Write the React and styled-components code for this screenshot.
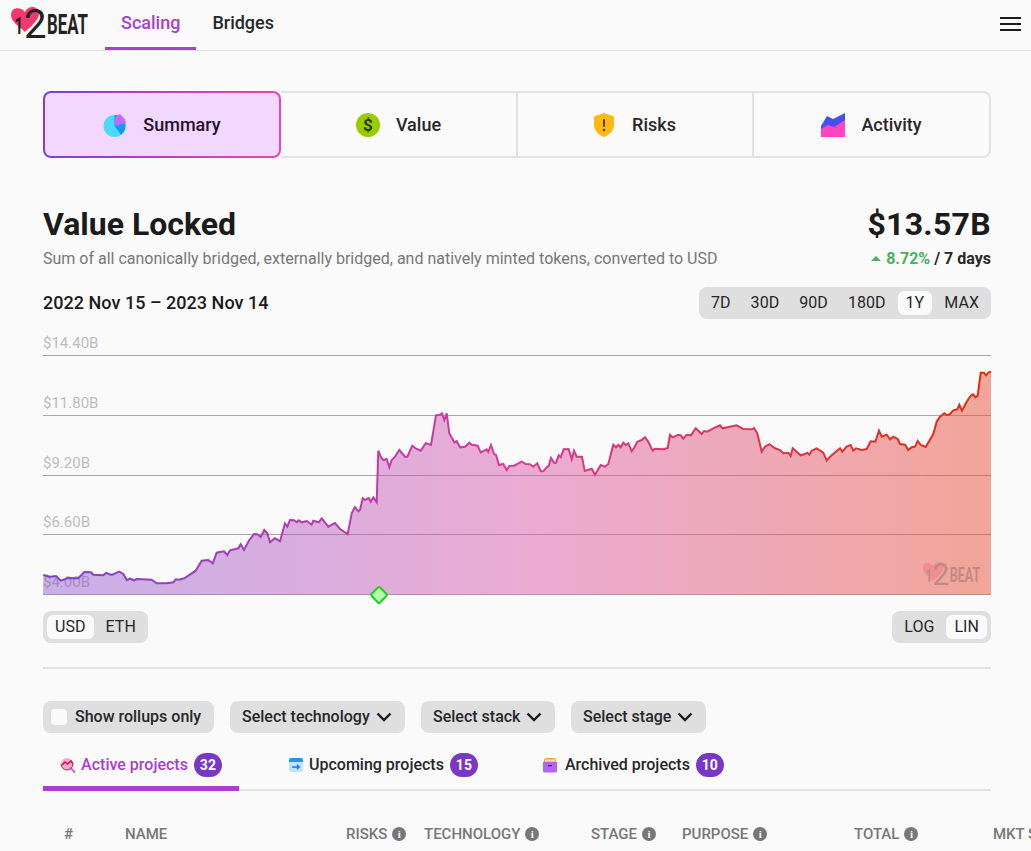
import React from "react";
import styled, { createGlobalStyle } from "styled-components";

const GlobalStyle = createGlobalStyle`
  html, body {
    margin: 0;
    height: 100%;
    overflow: hidden;
    background: #fafafa;
    font-family: Roboto, "Liberation Sans", sans-serif;
    color: #1b1b1b;
  }
  * { box-sizing: border-box; }
`;

const Page = styled.div`
  width: 1031px;
  height: 851px;
  overflow: hidden;
`;

const NavBar = styled.header`
  display: flex;
  align-items: stretch;
  height: 51px;
  border-bottom: 1px solid #e2e2e2;
  padding: 0 10px;
`;

const LogoLink = styled.div`
  display: flex;
  align-items: center;
  width: 95px;
`;

const LogoSvg = styled.svg`
  overflow: visible;
  opacity: ${(p) => p.$opacity};
`;

const NavLink = styled.a`
  display: flex;
  align-items: center;
  padding: 0 16px 2px;
  height: 50px;
  font-size: 18px;
  font-weight: 500;
  color: ${(p) => (p.$active ? "#a83fd0" : "#27272a")};
  border-bottom: 3px solid ${(p) => (p.$active ? "#a83fd0" : "transparent")};
`;

const Burger = styled.div`
  margin: 17px 0 0 auto;
  align-self: flex-start;
  display: flex;
  flex-direction: column;
  gap: 4px;
  width: 21px;
  & span {
    display: block;
    height: 2px;
    background: #1b1b1b;
  }
`;

const Main = styled.main`
  padding: 40px 40px 0 43px;
`;

const SectionTabs = styled.nav`
  display: grid;
  grid-template-columns: 238px 237px 236px 237px;
  height: 67px;
`;

const SectionTab = styled.a`
  display: flex;
  align-items: center;
  justify-content: center;
  gap: ${(p) => p.$gap || 16}px;
  font-size: 18px;
  font-weight: 500;
  color: #27272a;
  border: 2px solid #e2e2e2;
  border-left-width: 0;
  &:first-child { border-radius: 8px 0 0 8px; border-left-width: 2px; }
  &:last-child { border-radius: 0 8px 8px 0; }
  ${(p) =>
    p.$active &&
    `
    border: 2px solid transparent !important;
    border-radius: 8px !important;
    background: linear-gradient(#f2d7ff, #f2d7ff) padding-box,
      linear-gradient(90deg, #7e41cc, #ef43b0) border-box;
    color: #1f1030;
  `}
`;

const Header = styled.section`
  display: flex;
  justify-content: space-between;
  margin-top: 47px;
`;

const Title = styled.h1`
  margin: 0;
  font-size: 32px;
  line-height: 38px;
  font-weight: 700;
`;

const Amount = styled(Title)`
  letter-spacing: 0.3px;
`;

const Subtitle = styled.p`
  margin: 6px 0 0;
  font-size: 16px;
  line-height: 19px;
  color: #777;
`;

const Stats = styled.div`
  text-align: right;
`;

const Change = styled.p`
  margin: 6px 0 0;
  font-size: 16px;
  line-height: 19px;
  font-weight: 700;
  color: #27272a;
  display: flex;
  justify-content: flex-end;
  align-items: center;
  gap: 4px;
`;

const Up = styled.span`
  width: 0;
  height: 0;
  border: 5px solid transparent;
  border-top: 0;
  border-bottom: 5px solid #4caf62;
  margin-right: 1px;
`;

const Percent = styled.span`
  color: #4caf62;
`;

const RangeRow = styled.div`
  display: flex;
  align-items: center;
  justify-content: space-between;
  margin-top: 19px;
`;

const DateRange = styled.div`
  padding-bottom: 2px;
  font-size: 18px;
  font-weight: 500;
  letter-spacing: 0.03px;
`;

const Segmented = styled.div`
  display: flex;
  align-items: center;
  height: 32px;
  padding: 4px;
  gap: 4px;
  border-radius: 8px;
  background: #dfdfdf;
`;

const Segment = styled.span`
  height: 24px;
  line-height: 24px;
  padding: 0 8px;
  font-size: 16px;
  letter-spacing: 0.05px;
  border-radius: 6px;
  color: #27272a;
  background: ${(p) => (p.$active ? "#fafafa" : "transparent")};
`;

const ChartBox = styled.div`
  height: 276px;
  margin-top: 16px;
  & > svg {
    display: block;
    overflow: visible;
  }
`;

const ChartLabel = styled.text`
  font-family: Roboto, "Liberation Sans", sans-serif;
  font-size: 15px;
  fill: #bdbdbd;
`;

const ControlsRow = styled.div`
  display: flex;
  justify-content: space-between;
`;

const Divider = styled.hr`
  margin: 24px 0 0;
  border: 0;
  height: 2px;
  background: #e2e2e2;
`;

const Filters = styled.div`
  display: flex;
  gap: 16px;
  margin-top: 32px;
`;

const Filter = styled.div`
  display: flex;
  align-items: center;
  gap: ${(p) => p.$gap || 6}px;
  height: 32px;
  width: ${(p) => p.$width}px;
  padding: 0 0 2px ${(p) => p.$left || 12}px;
  border-radius: 8px;
  background: #dfdfdf;
  font-size: 16px;
  font-weight: 500;
  color: #27272a;
  white-space: nowrap;
`;

const CheckBox = styled.span`
  width: 16px;
  height: 16px;
  margin-top: 2px;
  border-radius: 4px;
  background: #fafafa;
`;

const ChevronSvg = styled.svg`
  margin-top: 2px;
`;

const ProjectTabs = styled.nav`
  display: flex;
  height: 58px;
  border-bottom: 2px solid #e2e2e2;
`;

const ProjectTab = styled.a`
  display: flex;
  align-items: center;
  justify-content: ${(p) => (p.$active ? "center" : "flex-start")};
  gap: 5px;
  width: ${(p) => p.$width}px;
  padding-left: ${(p) => p.$pad || 0}px;
  padding-top: 10px;
  margin-bottom: -2px;
  font-size: 16px;
  font-weight: 500;
  color: ${(p) => (p.$active ? "#a83fd0" : "#27272a")};
  border-bottom: 5px solid ${(p) => (p.$active ? "#a83fd0" : "transparent")};
`;

const Badge = styled.span`
  display: inline-flex;
  align-items: center;
  justify-content: center;
  width: 28px;
  height: 24px;
  margin-left: 1px;
  border-radius: 12px;
  background: #7a36c4;
  color: #fff;
  font-size: 14px;
  font-weight: 700;
`;

const TableHead = styled.div`
  display: grid;
  grid-template-columns: 61px 221px 78px 167px 91px 172px 139px 200px;
  width: 1129px;
  margin-top: 34px;
  padding-left: 21px;
  font-size: 15px;
  font-weight: 500;
  color: #777;
  white-space: nowrap;
`;

const HeadCell = styled.div`
  display: flex;
  align-items: center;
  gap: 5px;
  height: 18px;
`;

const InfoDot = styled.span`
  display: inline-flex;
  align-items: center;
  justify-content: center;
  width: 14px;
  height: 14px;
  border-radius: 50%;
  background: #777;
  color: #fafafa;
  font-size: 11px;
  font-weight: 700;
  font-family: "Liberation Serif", serif;
`;

const leftTrace = [[40,735],[60,740],[78,738],[92,752],[115,744],[145,745],[163,726],[183,727],[190,734],[220,736],[228,729],[245,735],[268,725],[280,732],[290,750],[300,746],[312,751],[320,747],[365,749],[380,760],[410,760],[430,757],[437,748],[447,749],[463,745],[497,722],[515,692],[535,690],[548,700],[560,668],[582,664],[592,675],[600,661],[625,655],[632,643],[642,660],[658,630],[672,612],[682,613],[692,621],[703,600],[712,610],[720,637],[735,625],[750,634],[765,580],[772,590],[780,570],[792,571],[800,577],[806,571],[815,577],[830,573],[845,584],[850,572],[866,577],[875,565],[895,590],[915,579],[930,597],[953,612],[965,550],[975,531],[985,544],[990,540],[998,505],[1005,510],[1016,504],[1022,515],[1030,502],[1040,517],[1045,362],[1052,380],[1060,390],[1070,387],[1078,412],[1085,390],[1095,380],[1108,360],[1125,380],[1132,380],[1147,347],[1160,357],[1172,362],[1187,340],[1203,345],[1218,256],[1230,254],[1236,250],[1243,270],[1250,250],[1258,310],[1273,337],[1280,333],[1290,352],[1305,350],[1318,338],[1325,344],[1343,347],[1352,368],[1370,358],[1375,366],[1383,345],[1392,372],[1398,375],[1407,405],[1420,402],[1430,420],[1438,408],[1452,407],[1475,395],[1487,402]];
const rightTrace = [[0,403],[10,410],[22,400],[32,424],[40,424],[50,412],[56,408],[63,384],[72,398],[78,398],[86,376],[92,382],[101,358],[116,357],[125,388],[132,362],[140,380],[156,380],[164,423],[185,416],[195,434],[212,405],[225,410],[235,402],[250,344],[258,352],[265,345],[272,352],[280,338],[287,345],[295,340],[305,364],[312,355],[322,335],[335,330],[345,322],[355,335],[368,362],[375,356],[400,358],[413,354],[420,315],[428,322],[445,314],[452,316],[460,326],[470,314],[483,316],[497,295],[515,312],[522,303],[532,305],[550,295],[570,286],[578,295],[600,290],[620,286],[640,297],[665,298],[672,294],[682,310],[695,365],[705,350],[718,343],[735,355],[750,360],[760,370],[775,368],[782,378],[788,355],[812,376],[825,372],[832,368],[838,374],[845,362],[860,355],[880,368],[890,392],[900,380],[930,355],[937,365],[950,350],[962,345],[970,362],[978,355],[995,360],[1010,357],[1022,334],[1036,335],[1047,302],[1055,320],[1070,314],[1080,328],[1090,320],[1103,327],[1110,342],[1125,344],[1135,360],[1145,352],[1155,350],[1163,333],[1172,345],[1187,351],[1210,312],[1220,275],[1230,260],[1243,250],[1250,255],[1258,254],[1270,241],[1282,238],[1288,224],[1296,242],[1310,215],[1322,197],[1330,193],[1336,202],[1343,197],[1352,128],[1362,128],[1368,136],[1376,127],[1383,125]];

// traced from the picture, chart origin is page (43, 335)
const CHART_W = 948;
const chartPoints = [
  ...leftTrace.map(([x, y]) => [x / 3 + 30 - 43, y / 3 + 330 - 335]),
  ...rightTrace.map(([x, y]) => [x / 3 + 530 - 43, y / 3 + 330 - 335]),
];
const linePath = "M" + chartPoints.map(([x, y]) => `${x.toFixed(1)} ${y.toFixed(1)}`).join("L");
const areaPath = `${linePath}L${CHART_W} 259.5L0 259.5Z`;

const gridLines = [
  { y: 20.5, label: "$14.40B" },
  { y: 80.5, label: "$11.80B" },
  { y: 140.5, label: "$9.20B" },
  { y: 199.5, label: "$6.60B" },
  { y: 259.5, label: "$4.00B" },
];

const Logo = ({ width = 80, height = 36, opacity = 1 }) => (
  <LogoSvg width={width} height={height} viewBox="0 0 80 36" $opacity={opacity}>
    <path d="M15 5C12 0 1-1 1 8 1 15 9 19 15 25 21 19 29 13 29 7 29-2 18-2 15 5z" fill="#f2386f" />
    <text transform="translate(4.5 27) scale(.62 1)" fontFamily="Roboto" fontWeight="700" fontSize="24" fill="#222">1</text>
    <text transform="translate(14 31) scale(.98 1)" fontFamily="Roboto" fontWeight="400" fontSize="41" fill="#222">2</text>
    <text transform="translate(37 27) scale(.6 1)" fontFamily="Roboto" fontWeight="700" fontSize="28" fill="#222">BEAT</text>
  </LogoSvg>
);

const SummaryIcon = () => (
  <svg width="24" height="24" viewBox="0 0 24 24">
    <circle cx="11.5" cy="13" r="11" fill="#4ad9ff" />
    <path d="M11.5 13V2a11 11 0 0 1 11 11z" fill="#0e9bf0" />
    <path d="M11.5 13L12 4.5 L17 1 L22 6.5 L23 10z" fill="#c766ff" />
    <path d="M11.5 13H22.5A11 11 0 0 1 18 21.8z" fill="#0e9bf0" />
  </svg>
);

const ValueIcon = () => (
  <svg width="24" height="24" viewBox="0 0 24 24">
    <circle cx="12" cy="12" r="12" fill="#99cc00" />
    <text x="12" y="18" textAnchor="middle" fontFamily="Roboto" fontWeight="700" fontSize="17" fill="#27400a">$</text>
  </svg>
);

const RiskIcon = () => (
  <svg width="20" height="24" viewBox="0 0 20 24">
    <path d="M10 0L20 3.5V12c0 5.5-4.5 10-10 12C4.5 22 0 17.5 0 12V3.5z" fill="#ffb911" />
    <rect x="9" y="6" width="2" height="8" rx="1" fill="#5b3c00" />
    <circle cx="10" cy="17" r="1.3" fill="#5b3c00" />
  </svg>
);

const ActivityIcon = () => (
  <svg width="24" height="24" viewBox="0 0 24 24">
    <path d="M0 13L6 3l6 3 12-6v24H0z" fill="#4450f5" />
    <path d="M0 16L7 12l6 2 11-7v17H0z" fill="#ff46c0" />
  </svg>
);

const ActiveIcon = () => (
  <svg width="16" height="16" viewBox="0 0 16 16">
    <circle cx="7" cy="7" r="6" fill="#f3a9c9" />
    <path d="M2 8l3-3 2.5 2L11 4l2 3" fill="none" stroke="#b5225f" strokeWidth="1.6" />
    <path d="M10.5 11l4 4" stroke="#c06be0" strokeWidth="2" strokeLinecap="round" />
    <path d="M1 7a6 6 0 0 0 12 0" fill="none" stroke="#b5225f" strokeWidth="1" />
  </svg>
);

const UpcomingIcon = () => (
  <svg width="16" height="16" viewBox="0 0 16 16">
    <rect x="1" y="1" width="14" height="14" rx="2" fill="#bfe4fb" />
    <path d="M1 3a2 2 0 0 1 2-2h10a2 2 0 0 1 2 2v2H1z" fill="#2a93e6" />
    <path d="M4 10h7M9 7.8l2.3 2.2L9 12.2" fill="none" stroke="#2d6fd0" strokeWidth="1.4" />
  </svg>
);

const ArchivedIcon = () => (
  <svg width="18" height="16" viewBox="0 0 18 16">
    <path d="M2 3a2 2 0 0 1 2-2h8a2 2 0 0 1 2 2v3H2z" fill="#f2a24a" />
    <rect x="3" y="2.5" width="10" height="2" fill="#fde0a8" />
    <path d="M1 5h14v9a1.5 1.5 0 0 1-1.5 1.5h-11A1.5 1.5 0 0 1 1 14z" fill="#b266f0" />
    <rect x="6" y="8" width="4" height="1.3" fill="#4c1d95" />
  </svg>
);

const Chevron = () => (
  <ChevronSvg width="16" height="10" viewBox="0 0 16 10">
    <path d="M1.5 1.5L8 8l6.5-6.5" fill="none" stroke="#1b1b1b" strokeWidth="2.4" />
  </ChevronSvg>
);

const Chart = () => (
  <ChartBox>
    <svg width={CHART_W} height="268" viewBox={`0 0 ${CHART_W} 268`}>
      <defs>
        <linearGradient id="stroke" gradientUnits="userSpaceOnUse" x1="0" y1="0" x2={CHART_W} y2="0">
          <stop offset="0" stopColor="#7e41cc" />
          <stop offset="0.5" stopColor="#d83a98" />
          <stop offset="1" stopColor="#e22d0a" />
        </linearGradient>
        <linearGradient id="fill" gradientUnits="userSpaceOnUse" x1="0" y1="0" x2={CHART_W} y2="0">
          <stop offset="0" stopColor="#7e41cc" stopOpacity="0.4" />
          <stop offset="0.5" stopColor="#d84fa8" stopOpacity="0.46" />
          <stop offset="1" stopColor="#e8462a" stopOpacity="0.47" />
        </linearGradient>
      </defs>
      {gridLines.map((g) => (
        <g key={g.label}>
          <ChartLabel x="0" y={g.y - 8}>{g.label}</ChartLabel>
          <line x1="0" x2={CHART_W} y1={g.y} y2={g.y} stroke="#a9a5a8" />
        </g>
      ))}
      <path d={areaPath} fill="url(#fill)" />
      <path d={linePath} fill="none" stroke="url(#stroke)" strokeWidth="2" />
      <g transform="translate(879 227)">
        <Logo width={60} height={27} opacity={0.22} />
      </g>
      <rect x="330" y="254" width="12" height="12" rx="1.5" transform="rotate(45 336 260)" fill="#b4fbb0" stroke="#1fce1f" strokeWidth="2" />
    </svg>
  </ChartBox>
);

const HeadInfo = ({ children }) => (
  <HeadCell>
    {children}
    <InfoDot>i</InfoDot>
  </HeadCell>
);

export default function App() {
  return (
    <Page>
      <GlobalStyle />
      <NavBar>
        <LogoLink>
          <Logo />
        </LogoLink>
        <NavLink $active>Scaling</NavLink>
        <NavLink>Bridges</NavLink>
        <Burger>
          <span />
          <span />
          <span />
        </Burger>
      </NavBar>
      <Main>
        <SectionTabs>
          <SectionTab $active><SummaryIcon />Summary</SectionTab>
          <SectionTab><ValueIcon />Value</SectionTab>
          <SectionTab $gap={18}><RiskIcon />Risks</SectionTab>
          <SectionTab><ActivityIcon />Activity</SectionTab>
        </SectionTabs>
        <Header>
          <div>
            <Title>Value Locked</Title>
            <Subtitle>Sum of all canonically bridged, externally bridged, and natively minted tokens, converted to USD</Subtitle>
          </div>
          <Stats>
            <Amount>$13.57B</Amount>
            <Change>
              <Up />
              <Percent>8.72%</Percent> / 7 days
            </Change>
          </Stats>
        </Header>
        <RangeRow>
          <DateRange>2022 Nov 15 – 2023 Nov 14</DateRange>
          <Segmented>
            <Segment>7D</Segment>
            <Segment>30D</Segment>
            <Segment>90D</Segment>
            <Segment>180D</Segment>
            <Segment $active>1Y</Segment>
            <Segment>MAX</Segment>
          </Segmented>
        </RangeRow>
        <Chart />
        <ControlsRow>
          <Segmented>
            <Segment $active>USD</Segment>
            <Segment>ETH</Segment>
          </Segmented>
          <Segmented>
            <Segment>LOG</Segment>
            <Segment $active>LIN</Segment>
          </Segmented>
        </ControlsRow>
        <Divider />
        <Filters>
          <Filter $width={171} $left={8} $gap={8}><CheckBox />Show rollups only</Filter>
          <Filter $width={175}>Select technology<Chevron /></Filter>
          <Filter $width={134}>Select stack<Chevron /></Filter>
          <Filter $width={135}>Select stage<Chevron /></Filter>
        </Filters>
        <ProjectTabs>
          <ProjectTab $active $width={196}><ActiveIcon />Active projects<Badge>32</Badge></ProjectTab>
          <ProjectTab $width={255} $pad={49}><UpcomingIcon />Upcoming projects<Badge>15</Badge></ProjectTab>
          <ProjectTab $width={300} $pad={48}><ArchivedIcon />Archived projects<Badge>10</Badge></ProjectTab>
        </ProjectTabs>
        <TableHead>
          <HeadCell>#</HeadCell>
          <HeadCell>NAME</HeadCell>
          <HeadInfo>RISKS</HeadInfo>
          <HeadInfo>TECHNOLOGY</HeadInfo>
          <HeadInfo>STAGE</HeadInfo>
          <HeadInfo>PURPOSE</HeadInfo>
          <HeadInfo>TOTAL</HeadInfo>
          <HeadCell>MKT SHARE</HeadCell>
        </TableHead>
      </Main>
    </Page>
  );
}
